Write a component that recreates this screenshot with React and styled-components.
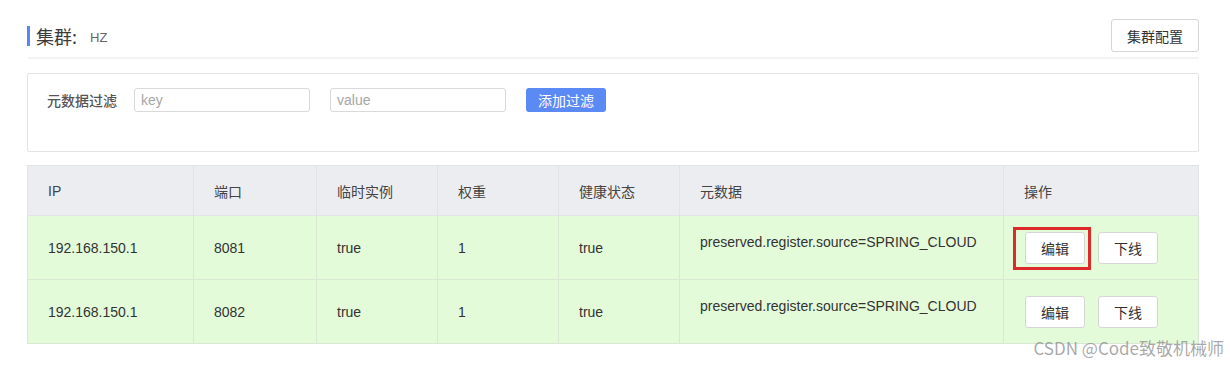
import React from "react";
import styled, { createGlobalStyle } from "styled-components";

const Global = createGlobalStyle`
  html, body { margin: 0; padding: 0; background: #fff; }
  body {
    font-family: "Liberation Sans", "Noto Sans CJK SC", sans-serif;
    color: #333;
    width: 1230px;
    height: 368px;
    overflow: hidden;
  }
  * { box-sizing: border-box; }
`;

const Page = styled.div`
  position: relative;
  padding: 19px 31px 0 27px;
  height: 368px;
`;

const HeaderBar = styled.div`
  display: flex;
  align-items: center;
  justify-content: space-between;
  height: 33px;
`;

const Title = styled.div`
  display: flex;
  align-items: center;
  border-left: 3px solid #5b86f2;
  height: 20px;
  padding-left: 6px;
`;

const TitleMain = styled.span`
  font-family: "Noto Sans CJK SC", sans-serif;
  font-size: 18px;
  font-weight: 400;
  color: #3a3a3a;
  line-height: 20px;
`;

const TitleSub = styled.span`
  font-size: 13px;
  color: #666;
  margin-left: 13px;
  margin-top: 3px;
`;

const Button = styled.button`
  font-family: "Noto Sans CJK SC", sans-serif;
  font-size: 14px;
  color: #333;
  background: #fff;
  border: 1px solid #d6d6d6;
  border-radius: 3px;
  width: ${(p) => p.$w || 60}px;
  height: ${(p) => p.$h || 32}px;
  padding: 0;
  cursor: pointer;
`;

const Divider = styled.div`
  margin-top: 5px;
  height: 2px;
  background: #f3f3f3;
  margin-left: 1px;
`;

const FilterBox = styled.div`
  margin-top: 14px;
  height: 79px;
  border: 1px solid #e3e3e3;
  border-radius: 2px;
  padding: 14px 0 0 19px;
  display: flex;
  align-items: flex-start;
`;

const FilterLabel = styled.span`
  font-family: "Noto Sans CJK SC", sans-serif;
  font-size: 14px;
  color: #555;
  line-height: 24px;
  margin-right: 17px;
  font-weight: 500;
`;

const Input = styled.input`
  width: 176px;
  height: 24px;
  border: 1px solid #d9d9d9;
  border-radius: 3px;
  padding: 0 6px;
  font-family: "Liberation Sans", sans-serif;
  font-size: 14px;
  color: #333;
  margin-right: 20px;
  outline: none;
  &::placeholder { color: #a6a6a6; }
`;

const PrimaryButton = styled.button`
  width: 80px;
  height: 24px;
  border: none;
  border-radius: 3px;
  background: #5b8af5;
  color: #fff;
  font-family: "Noto Sans CJK SC", sans-serif;
  font-size: 14px;
  padding: 0;
`;

const Table = styled.table`
  margin-top: 13px;
  width: 1171px;
  border-collapse: collapse;
  table-layout: fixed;
  font-size: 14px;
`;

const Th = styled.th`
  height: 50px;
  background: #ebedf1;
  border: 1px solid #e0e3e8;
  text-align: left;
  padding: 0 0 0 20px;
  font-weight: normal;
  font-family: "Liberation Sans", "Noto Sans CJK SC", sans-serif;
  color: #444;
  width: ${(p) => p.$w}px;
`;

const Tr = styled.tr`
  background: #e4fbda;
`;

const Td = styled.td`
  height: 64px;
  border: 1px solid #d9e8d3;
  padding: ${(p) => (p.$top ? "16px 0 0 20px" : "0 0 0 20px")};
  vertical-align: ${(p) => (p.$top ? "top" : "middle")};
  color: #333;
  line-height: 20px;
`;

const Actions = styled.div`
  position: relative;
  display: flex;
  gap: 13px;
  margin-left: 1px;
`;

const Highlight = styled.div`
  position: absolute;
  left: -12px;
  top: -5px;
  width: 78px;
  height: 43px;
  border: 3px solid #dc2a2a;
  pointer-events: none;
`;

const Watermark = styled.div`
  position: absolute;
  right: 6px;
  bottom: 8px;
  font-family: "Noto Sans CJK SC", sans-serif;
  font-size: 17px;
  color: rgba(140, 140, 140, 0.75);
  white-space: nowrap;
`;

const cols = [
  { t: "IP", w: 166 },
  { t: "端口", w: 123 },
  { t: "临时实例", w: 121 },
  { t: "权重", w: 121 },
  { t: "健康状态", w: 121 },
  { t: "元数据", w: 324 },
  { t: "操作", w: 195 },
];

const rows = [
  { ip: "192.168.150.1", port: "8081", highlight: true },
  { ip: "192.168.150.1", port: "8082", highlight: false },
];

export default function App() {
  return (
    <>
      <Global />
      <Page>
        <HeaderBar>
          <Title>
            <TitleMain>集群:</TitleMain>
            <TitleSub>HZ</TitleSub>
          </Title>
          <Button $w={88} $h={33}>集群配置</Button>
        </HeaderBar>
        <Divider />
        <FilterBox>
          <FilterLabel>元数据过滤</FilterLabel>
          <Input placeholder="key" />
          <Input placeholder="value" />
          <PrimaryButton>添加过滤</PrimaryButton>
        </FilterBox>
        <Table>
          <thead>
            <tr>
              {cols.map((c) => (
                <Th key={c.t} $w={c.w}>{c.t}</Th>
              ))}
            </tr>
          </thead>
          <tbody>
            {rows.map((r) => (
              <Tr key={r.port}>
                <Td>{r.ip}</Td>
                <Td>{r.port}</Td>
                <Td>true</Td>
                <Td>1</Td>
                <Td>true</Td>
                <Td $top>preserved.register.source=SPRING_CLOUD</Td>
                <Td>
                  <Actions>
                    {r.highlight && <Highlight />}
                    <Button>编辑</Button>
                    <Button>下线</Button>
                  </Actions>
                </Td>
              </Tr>
            ))}
          </tbody>
        </Table>
        <Watermark>CSDN @Code致敬机械师</Watermark>
      </Page>
    </>
  );
}
